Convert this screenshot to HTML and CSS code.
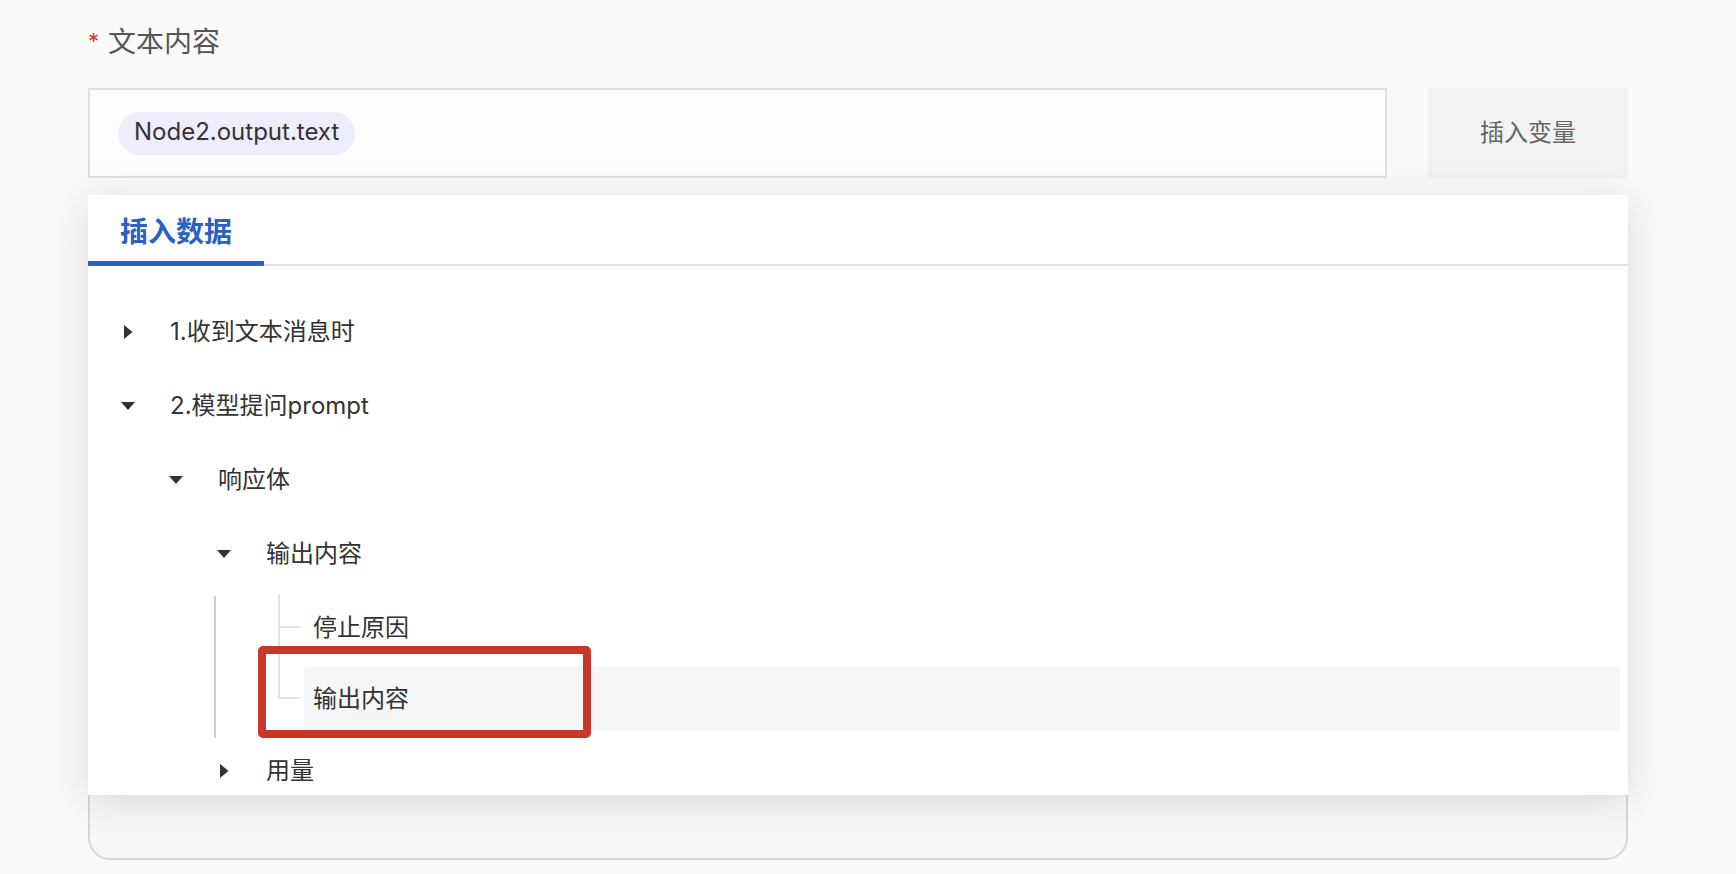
FILE: index.html
```html
<!DOCTYPE html>
<html lang="zh-CN">
<head>
<meta charset="utf-8">
<title>文本内容</title>
<link rel="stylesheet" href="styles.css">
</head>
<body>
<main class="form">
  <div class="field">
    <div class="field-label"><span class="req">*</span>文本内容</div>
    <div class="input-row">
      <div class="editor"><span class="chip">Node2.output.text</span></div>
      <button class="insert-btn">插入变量</button>
    </div>
    <div class="hint">请输入文本内容，可插入变量</div>
    <div class="textarea-box"></div>

    <div class="popup">
      <div class="tabbar">
        <div class="tab">插入数据</div>
      </div>
      <div class="tree">
        <div class="row lvl1">
          <span class="toggle"><svg width="14" height="14" viewBox="0 0 14 14"><polygon points="3,0 11.5,7 3,14" fill="#333"/></svg></span>
          <span class="label">1.收到文本消息时</span>
        </div>
        <div class="row lvl1">
          <span class="toggle"><svg width="14" height="14" viewBox="0 0 14 14"><polygon points="0,3 14,3 7,11" fill="#333"/></svg></span>
          <span class="label">2.模型提问prompt</span>
        </div>
        <div class="row lvl2">
          <span class="toggle"><svg width="14" height="14" viewBox="0 0 14 14"><polygon points="0,3 14,3 7,11" fill="#333"/></svg></span>
          <span class="label">响应体</span>
        </div>
        <div class="row lvl3">
          <span class="toggle"><svg width="14" height="14" viewBox="0 0 14 14"><polygon points="0,3 14,3 7,11" fill="#333"/></svg></span>
          <span class="label">输出内容</span>
        </div>
        <div class="leaf-group">
          <div class="leaf first">
            <span class="leaf-line"></span>
            <span class="leaf-label">停止原因</span>
          </div>
          <div class="leaf last">
            <span class="leaf-line"></span>
            <span class="leaf-label selected">输出内容</span>
          </div>
        </div>
        <div class="row lvl3 usage">
          <span class="toggle"><svg width="14" height="14" viewBox="0 0 14 14"><polygon points="3,0 11.5,7 3,14" fill="#333"/></svg></span>
          <span class="label">用量</span>
        </div>
      </div>
      <div class="annotation"></div>
    </div>
  </div>
</main>
</body>
</html>
```

FILE: styles.css
```css
* { box-sizing: border-box; }

html, body {
  margin: 0;
  padding: 0;
  background: #fafafa;
  font-family: "Inter", "Noto Sans CJK SC", "Noto Sans", sans-serif;
  color: #333;
  overflow: hidden;
}

.form {
  padding: 22px 0 0 88px;
  width: 1628px;
}

.field {
  position: relative;
}

.field-label {
  height: 40px;
  line-height: 40px;
  font-size: 28px;
  color: #555;
  display: flex;
  align-items: center;
}

.req {
  color: #d43a2c;
  font-size: 22px;
  width: 20px;
  line-height: 22px;
  align-self: flex-start;
  margin-top: 8px;
}

.input-row {
  margin-top: 26px;
  display: flex;
  gap: 41px;
  height: 90px;
}

.editor {
  flex: 1;
  border: 2px solid #e0e0e0;
  background: #fdfdfd;
  display: flex;
  align-items: center;
  padding-left: 28px;
}

.chip {
  height: 43px;
  line-height: 39px;
  padding: 0 16px 4px;
  border-radius: 22px;
  background: #eeedfb;
  font-size: 24px;
  color: #333;
}

.insert-btn {
  width: 200px;
  height: 90px;
  border: none;
  background: #f2f2f2;
  color: #666;
  font-family: inherit;
  font-size: 24px;
  padding: 0 0 5px;
}

.hint {
  margin-top: 16px;
  height: 30px;
  line-height: 30px;
  font-size: 24px;
  color: #c8c8c8;
}

.textarea-box {
  margin-top: 5px;
  height: 631px;
  border: 2px solid #d6d6d6;
  border-radius: 22px;
  background: #f7f7f7;
}

.popup {
  position: absolute;
  top: 173px;
  left: 0;
  width: 1540px;
  height: 600px;
  background: #fff;
  box-shadow: 0 6px 40px rgba(0, 0, 0, 0.13);
  overflow: hidden;
}

.tabbar {
  height: 71px;
  border-bottom: 2px solid #e2e2e2;
  display: flex;
}

.tab {
  height: 71px;
  padding: 4px 32px 0;
  display: flex;
  align-items: center;
  font-size: 28px;
  font-weight: 700;
  color: #2a62c2;
  border-bottom: 5px solid #2962c4;
}

.tree {
  padding: 34px 8px 0 0;
  display: flex;
  flex-direction: column;
  gap: 10px;
}

.row {
  height: 64px;
  display: flex;
  align-items: center;
  font-size: 24px;
  color: #333;
}

.row .label {
  padding-bottom: 6px;
}

.row.lvl1 { padding-left: 33px; }
.row.lvl2 { padding-left: 81px; }
.row.lvl3 { padding-left: 129px; }

.toggle {
  width: 14px;
  height: 14px;
  display: flex;
  margin-right: 35px;
}

.leaf-group {
  margin-left: 126px;
  border-left: 2px solid #cdcdcd;
  padding-bottom: 7px;
  display: flex;
  flex-direction: column;
  gap: 7px;
  margin-bottom: -9px;
}

.leaf {
  height: 64px;
  display: flex;
  align-items: stretch;
}

.leaf-line {
  position: relative;
  width: 22px;
  margin-left: 62px;
  flex: none;
}

.leaf-line::before {
  content: "";
  position: absolute;
  left: 0;
  width: 2px;
  background: #e3e3e3;
}

.leaf.first .leaf-line::before { top: -2px; bottom: -7px; }
.leaf.last .leaf-line::before { top: 0; height: 32px; }

.leaf-line::after {
  content: "";
  position: absolute;
  left: 0;
  top: 30px;
  width: 22px;
  height: 2px;
  background: #e3e3e3;
}

.leaf-label {
  flex: 1;
  margin-left: 4px;
  padding: 0 0 6px 9px;
  display: flex;
  align-items: center;
  font-size: 24px;
  color: #333;
  border-radius: 4px;
}

.leaf-label.selected {
  background: #f5f6f8;
}

.annotation {
  position: absolute;
  left: 170px;
  top: 451px;
  width: 333px;
  height: 92px;
  border: 8px solid #c9372a;
  border-radius: 5px;
}
```
